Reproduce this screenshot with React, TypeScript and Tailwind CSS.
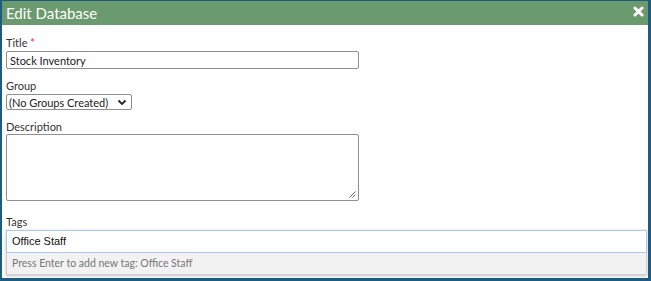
const labelCls = "block h-[14px] text-[11px] leading-[14px] text-[#333]";

const EditDatabase = () => {
  return (
    <div className="w-[651px] h-[281px] bg-white border-[#1d5c7e] border-l-2 border-t border-r-[3px] border-b-[3px] flex flex-col font-['Lato',sans-serif] overflow-hidden">
      <div className="h-[24px] bg-[#6a9a6d] flex items-center justify-between pl-[4px] pr-[4px] shrink-0">
        <span className="text-white text-[15px] leading-none font-normal">Edit Database</span>
        <svg width="11" height="11" viewBox="0 0 14 14" className="mb-[3px]">
          <path d="M2.5 2.5 L11.5 11.5 M11.5 2.5 L2.5 11.5" stroke="white" strokeWidth="3.8" strokeLinecap="round" />
        </svg>
      </div>

      <div className="flex flex-col pl-[4px] pt-[11px]">
        <label className={labelCls}>
          Title <span className="text-[#e53030]">*</span>
        </label>
        <input
          readOnly
          value="Stock Inventory"
          className="mt-[1px] w-[353px] h-[18px] border border-[#8f8f8f] rounded-[2px] px-[3px] text-[11px] text-[#222] outline-none"
        />

        <label className={`${labelCls} mt-[10px]`}>Group</label>
        <div className="mt-[1px] w-[126px] h-[16px] border border-[#8f8f8f] rounded-[2px] flex items-center justify-between pl-[2px] pr-[4px] text-[11px] text-[#222] whitespace-nowrap">
          <span className="leading-none">(No Groups Created)</span>
          <svg width="10" height="7" viewBox="0 0 10 7">
            <path d="M1.5 1.5 L5 5 L8.5 1.5" stroke="#222" strokeWidth="1.8" fill="none" />
          </svg>
        </div>

        <label className={`${labelCls} mt-[10px]`}>Description</label>
        <div className="relative w-[353px] h-[67px] border border-[#8f8f8f] rounded-[2px]">
          <svg width="7" height="7" viewBox="0 0 7 7" className="absolute right-[2px] bottom-[2px]">
            <path d="M6.5 0.5 L0.5 6.5 M6.5 3.5 L3.5 6.5" stroke="#555" strokeWidth="0.9" />
          </svg>
        </div>

        <label className={`${labelCls} mt-[14px]`}>Tags</label>
        <div className="mt-[1px] mr-[1px] flex flex-col shadow-[0_1px_3px_rgba(0,0,0,0.25)]">
          <div className="h-[23px] border border-[#a9c9f5] flex items-center px-[5px] text-[11px] text-[#111] font-['Liberation_Sans',sans-serif]">
            Office Staff
          </div>
          <div className="h-[22px] bg-[#f2f2f2] border border-t-0 border-[#d0d0d0] flex items-center px-[5px] text-[10.5px] text-[#777]">
            Press Enter to add new tag: Office Staff
          </div>
        </div>
      </div>
    </div>
  );
};

export default function App() {
  return <EditDatabase />;
}
